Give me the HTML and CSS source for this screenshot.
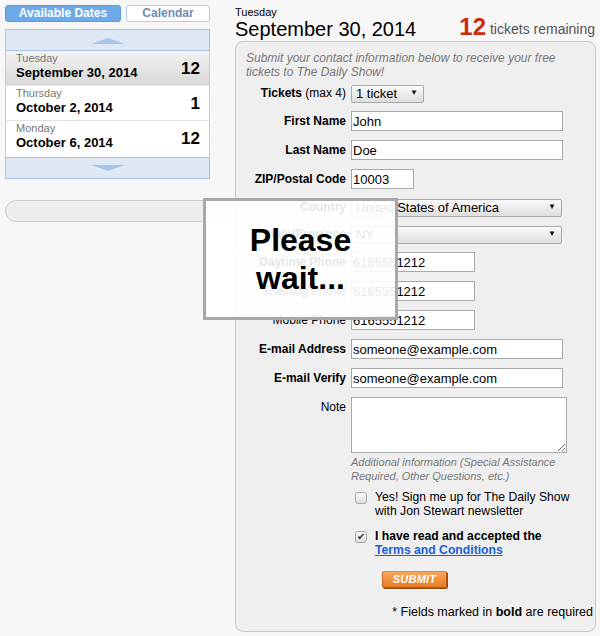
FILE: index.html
```html
<!DOCTYPE html>
<html>
<head>
<meta charset="utf-8">
<link rel="stylesheet" href="styles.css">
</head>
<body>
<div class="page">
  <aside class="sidebar">
    <div class="tabs">
      <button class="tab tab-active">Available Dates</button>
      <button class="tab">Calendar</button>
    </div>
    <div class="datelist">
      <div class="scroll scroll-up"><span class="tri-up"></span></div>
      <div class="date-row selected">
        <div class="date-text"><div class="dow">Tuesday</div><div class="date">September 30, 2014</div></div>
        <div class="count">12</div>
      </div>
      <div class="date-row">
        <div class="date-text"><div class="dow">Thursday</div><div class="date">October 2, 2014</div></div>
        <div class="count">1</div>
      </div>
      <div class="date-row">
        <div class="date-text"><div class="dow">Monday</div><div class="date">October 6, 2014</div></div>
        <div class="count">12</div>
      </div>
      <div class="scroll scroll-down"><span class="tri-down"></span></div>
    </div>
    <div class="progress"></div>
  </aside>

  <main class="main">
    <header class="head">
      <div class="head-date">
        <div class="head-dow">Tuesday</div>
        <div class="head-day">September 30, 2014</div>
      </div>
      <div class="remaining"><span class="rem-num">12</span> tickets remaining</div>
    </header>

    <section class="panel">
      <p class="intro">Submit your contact information below to receive your free tickets to The Daily Show!</p>
      <div class="grid">
        <label class="lbl"><b>Tickets</b> (max 4)</label>
        <span class="sel sel-tickets"><select><option>1 ticket</option></select></span>

        <label class="lbl"><b>First Name</b></label>
        <input class="inp w-long" type="text" value="John">

        <label class="lbl"><b>Last Name</b></label>
        <input class="inp w-long" type="text" value="Doe">

        <label class="lbl"><b>ZIP/Postal Code</b></label>
        <input class="inp w-zip" type="text" value="10003">

        <label class="lbl"><b>Country</b></label>
        <span class="sel sel-wide"><select><option>United States of America</option></select></span>

        <label class="lbl"><b>State/Province</b></label>
        <span class="sel sel-wide"><select><option>NY</option></select></span>

        <label class="lbl"><b>Daytime Phone</b></label>
        <input class="inp w-phone" type="text" value="6165551212">

        <label class="lbl">Evening Phone</label>
        <input class="inp w-phone" type="text" value="6165551212">

        <label class="lbl">Mobile Phone</label>
        <input class="inp w-phone" type="text" value="6165551212">

        <label class="lbl"><b>E-mail Address</b></label>
        <input class="inp w-long" type="text" value="someone@example.com">

        <label class="lbl"><b>E-mail Verify</b></label>
        <input class="inp w-long" type="text" value="someone@example.com">

        <label class="lbl lbl-top">Note</label>
        <textarea class="note"></textarea>
      </div>

      <div class="extras">
        <p class="help">Additional information (Special Assistance Required, Other Questions, etc.)</p>
        <label class="check">
          <input type="checkbox" class="cb">
          <span class="check-text">Yes! Sign me up for The Daily Show with Jon Stewart newsletter</span>
        </label>
        <label class="check check-terms">
          <input type="checkbox" class="cb" checked>
          <span class="check-text"><b>I have read and accepted the</b><br><a href="#" class="terms">Terms and Conditions</a></span>
        </label>
        <button class="submit">SUBMIT</button>
      </div>
      <p class="required">* Fields marked in <b>bold</b> are required</p>
    </section>
  </main>

  <div class="wait">Please<br>wait...</div>
</div>
</body>
</html>
```

FILE: styles.css
```css
* { box-sizing: border-box; }
html, body { margin: 0; padding: 0; }
body {
  background: #f7f7f7;
  font-family: "Liberation Sans", Arial, sans-serif;
  color: #000;
  width: 600px;
  height: 636px;
  overflow: hidden;
}
.page {
  position: relative;
  display: flex;
  padding: 5px 4px 0 5px;
}
.sidebar {
  width: 205px;
  flex: none;
}
.tabs {
  display: flex;
  gap: 5px;
  height: 17px;
}
.tab {
  margin: 0;
  padding: 0;
  font: bold 12px "Liberation Sans", Arial, sans-serif;
  border-radius: 3px;
  height: 17px;
  line-height: 15px;
}
.tab-active {
  width: 116px;
  background: #6eaae8;
  border: 1px solid #5e9ad8;
  color: #fff;
}
.tab:not(.tab-active) {
  width: 84px;
  background: #fff;
  border: 1px solid #b3cdee;
  color: #6f8db8;
}
.datelist {
  margin-top: 7px;
  width: 205px;
  border-left: 1px solid #ccc;
  border-right: 1px solid #ccc;
}
.scroll {
  height: 22px;
  background: #dfe9f5;
  border: 1px solid #a8c3e6;
  margin: 0 -1px;
  display: flex;
  justify-content: center;
}
.scroll-up { align-items: flex-end; padding-bottom: 6px; }
.scroll-down { align-items: flex-start; padding-top: 7px; }
.tri-up {
  width: 0; height: 0;
  border-left: 17px solid transparent;
  border-right: 17px solid transparent;
  border-bottom: 6px solid #a7c6e7;
}
.tri-down {
  width: 0; height: 0;
  border-left: 17px solid transparent;
  border-right: 17px solid transparent;
  border-top: 6px solid #a7c6e7;
}
.date-row {
  height: 35px;
  display: flex;
  align-items: flex-start;
  justify-content: space-between;
  padding: 1px 9px 0 10px;
  background: #fff;
  border-bottom: 1px solid #e2e2e2;
}
.date-row:nth-last-child(2) { border-bottom: 0; height: 36px; }
.date-row.selected {
  background: linear-gradient(#f3f3f3, #d8d8d8);
  border-bottom: 1px solid #e6e6e6;
}
.dow {
  font-size: 11px;
  line-height: 13px;
  color: #777;
}
.date {
  font-size: 13px;
  font-weight: bold;
  line-height: 15px;
}
.count {
  font-size: 17px;
  font-weight: bold;
  line-height: 19px;
  margin-top: 7px;
}
.progress {
  margin-top: 21px;
  width: 226px;
  height: 22px;
  background: #eee;
  border: 1px solid #ccc;
  border-radius: 11px 0 0 11px;
}

.main {
  margin-left: 25px;
  width: 361px;
  flex: none;
}
.head {
  display: flex;
  justify-content: space-between;
  align-items: flex-end;
  height: 36px;
}
.head-dow {
  font-size: 11px;
  line-height: 11px;
}
.head-day {
  font-size: 20px;
  line-height: 22px;
  margin-bottom: 1px;
}
.remaining {
  font-size: 14px;
  color: #555;
  line-height: 24px;
  margin-right: 1px;
}
.rem-num {
  font-size: 24px;
  font-weight: bold;
  color: #cc2b0b;
  vertical-align: -1px;
}
.panel {
  background: #efefef;
  border: 1px solid #c9c9c9;
  border-radius: 8px;
  height: 591px;
  padding: 9px 0 0 0;
}
.intro {
  margin: 0;
  padding: 0 10px;
  font-size: 12px;
  line-height: 14px;
  font-style: italic;
  color: #777;
}
.grid {
  margin-top: 5px;
  display: grid;
  grid-template-columns: 110px 1fr;
  column-gap: 5px;
  row-gap: 9px;
  align-items: center;
}
.lbl {
  text-align: right;
  font-size: 12px;
  white-space: nowrap;
}
.lbl-top { align-self: start; padding-top: 3px; }
.inp {
  height: 20px;
  border: 1px solid #a9a9a9;
  background: #fff;
  font: 13px "Liberation Sans", Arial, sans-serif;
  padding: 0 1px;
  margin: 0;
  color: #000;
}
.w-long { width: 212px; }
.w-zip { width: 63px; }
.w-phone { width: 124px; }
.sel {
  position: relative;
  display: block;
  height: 18px;
}
.sel select {
  appearance: none;
  -webkit-appearance: none;
  height: 18px;
  width: 100%;
  border: 1px solid #a9a9a9;
  border-radius: 2px;
  background: linear-gradient(#fbfbfb, #dedede);
  font: 13px "Liberation Sans", Arial, sans-serif;
  padding: 0 0 0 4px;
  color: #000;
  margin: 0;
}
.sel::after {
  content: "▼";
  position: absolute;
  right: 6px;
  top: 4px;
  font-size: 8px;
  line-height: 9px;
  color: #111;
  pointer-events: none;
}
.sel-tickets { width: 73px; }
.sel-wide { width: 211px; }
.note {
  display: block;
  width: 216px;
  height: 56px;
  border: 1px solid #a9a9a9;
  background: #fff;
  margin: 0;
}
.extras {
  margin-left: 115px;
}
.help {
  margin: 2px 0 0 0;
  font-size: 11px;
  line-height: 14px;
  font-style: italic;
  color: #777;
}
.check {
  display: flex;
  gap: 8px;
  font-size: 12.2px;
  line-height: 14px;
  margin-top: 7px;
  padding-left: 4px;
}
.check-text { width: 200px; }
.check-terms { margin-top: 11px; }
.cb {
  appearance: none;
  -webkit-appearance: none;
  flex: none;
  width: 12px;
  height: 12px;
  margin: 2px 0 0 0;
  border: 1px solid #aaa;
  border-radius: 3px;
  background: linear-gradient(#fdfdfd, #dcdcdc);
  position: relative;
}
.cb:checked::after {
  content: "✔";
  position: absolute;
  left: 1px;
  top: -1px;
  font-size: 10px;
  line-height: 12px;
  color: #333;
}
.terms {
  color: #1a5fd6;
  font-weight: bold;
  text-decoration: underline;
}
.submit {
  display: block;
  margin: 14px 0 0 31px;
  width: 65px;
  height: 17px;
  padding: 0;
  border: 1px solid #b5581a;
  border-top-color: #d98a45;
  border-left-color: #c66a24;
  border-radius: 2px;
  background: linear-gradient(#f9a65a, #ea7a22);
  color: #fff;
  font: italic bold 11px "Liberation Sans", Arial, sans-serif;
  line-height: 15px;
  letter-spacing: 0.2px;
  box-shadow: 1px 1px 0 #8a4a1a;
}
.required {
  margin: 17px 0 0 0;
  padding-right: 2px;
  text-align: right;
  font-size: 12.5px;
  line-height: 14px;
}
.wait {
  position: absolute;
  left: 203px;
  top: 198px;
  width: 195px;
  height: 122px;
  border: 3px solid #a8a8a8;
  background: rgba(255, 255, 255, 0.9);
  display: flex;
  align-items: center;
  justify-content: center;
  text-align: center;
  font-size: 32px;
  font-weight: bold;
  line-height: 38px;
  color: #000;
}
```
